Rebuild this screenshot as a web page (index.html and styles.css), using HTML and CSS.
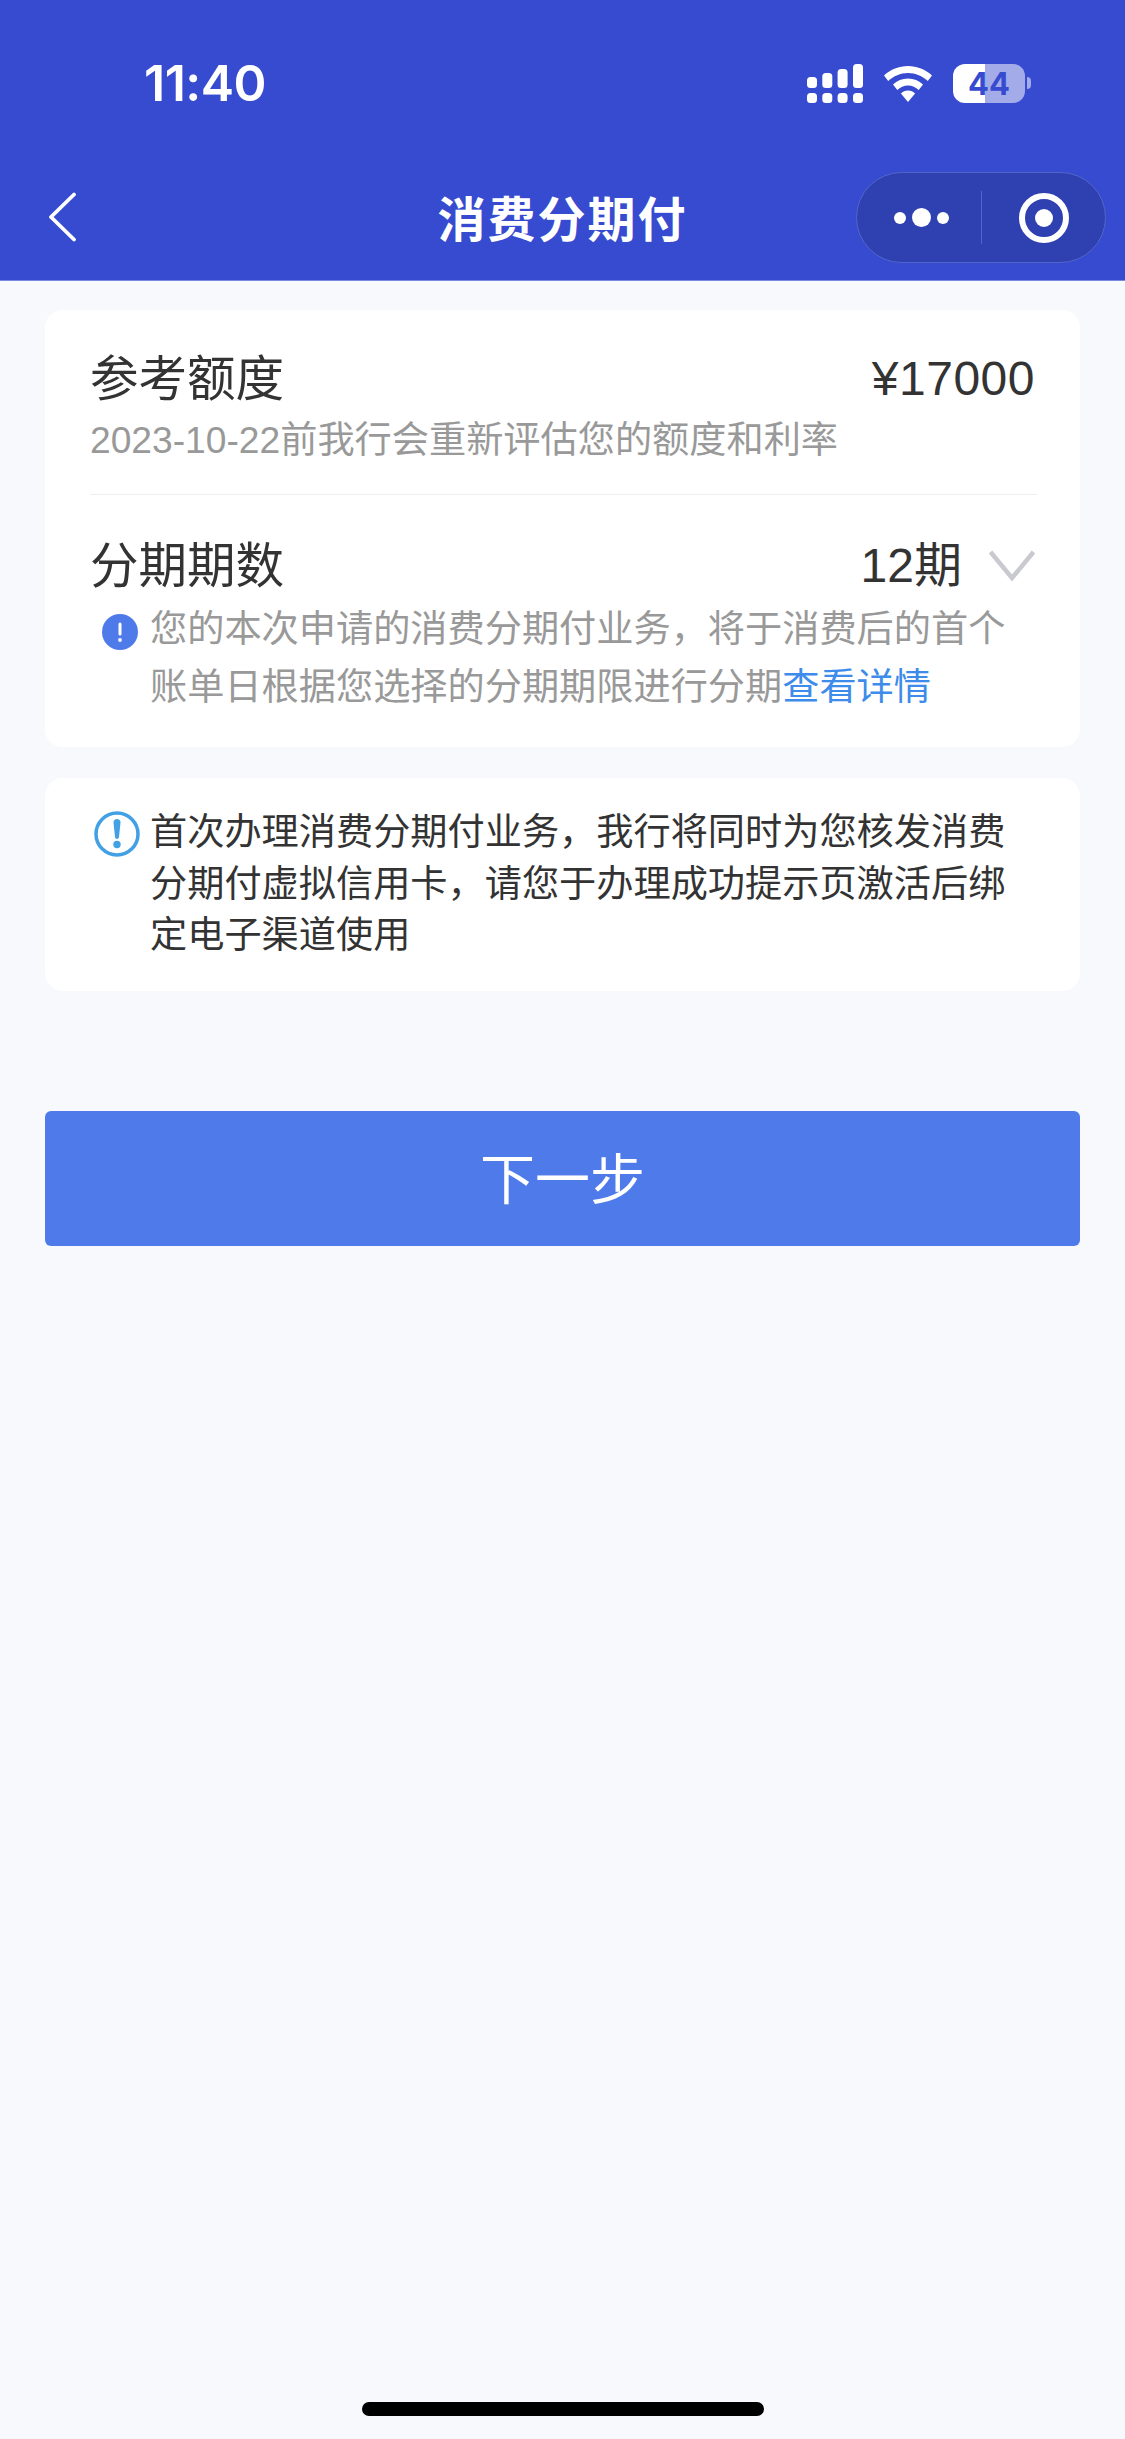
FILE: index.html
```html
<!DOCTYPE html>
<html lang="zh-CN">
<head>
<meta charset="utf-8">
<title>消费分期付</title>
<link rel="stylesheet" href="styles.css">
</head>
<body>
<div class="page">
  <header class="header">
    <div class="status">
      <span class="time">11:40</span>
      <div class="status-icons">
        <svg class="signal" width="56" height="39" viewBox="0 0 56 39" fill="#fff">
          <rect x="0" y="13" width="10" height="11" rx="3.5"/><rect x="15.3" y="9" width="10" height="15" rx="3.5"/><rect x="30.6" y="5" width="10" height="19" rx="3.5"/><rect x="46" y="0" width="10" height="24" rx="3.5"/>
          <rect x="0" y="29" width="10" height="10" rx="3.5"/><rect x="15.3" y="29" width="10" height="10" rx="3.5"/><rect x="30.6" y="29" width="10" height="10" rx="3.5"/><rect x="46" y="29" width="10" height="10" rx="3.5"/>
        </svg>
        <svg class="wifi" width="48" height="36" viewBox="0 0 48 36" fill="#fff">
          <path d="M24 0C33 0 41.500 3.500 48 9.500L43.800 15C38.500 10 31.500 7 24 7S9.500 10 4.200 15L0 9.500C6.500 3.500 15 0 24 0Z"/>
          <path d="M24 12.500C29.800 12.500 35 14.700 39 18.500L34.700 24C31.900 21.300 28.100 19.500 24 19.500S16.100 21.300 13.300 24L9 18.500C13 14.700 18.200 12.500 24 12.500Z"/>
          <path d="M24 24.500C26.800 24.500 29.300 25.600 31.100 27.400L24 36L16.900 27.400C18.700 25.600 21.200 24.500 24 24.500Z"/>
        </svg>
        <div class="battery"><span class="battery-level">44</span></div>
        <span class="battery-nub"></span>
      </div>
    </div>
    <nav class="nav">
      <svg class="back" width="30" height="50" viewBox="0 0 30 50" fill="none" stroke="#fff" stroke-width="3.800" stroke-linecap="round" stroke-linejoin="round">
        <path d="M26 2.500L3 25L26 47.500"/>
      </svg>
      <h1 class="title">消费分期付</h1>
      <div class="capsule">
        <div class="capsule-part dots">
          <span class="dot"></span><span class="dot dot-big"></span><span class="dot"></span>
        </div>
        <span class="capsule-line"></span>
        <div class="capsule-part target"><span class="target-dot"></span></div>
      </div>
    </nav>
  </header>

  <main class="main">
    <section class="card card-info">
      <div class="limit">
        <div class="row">
          <span class="label">参考额度</span>
          <span class="amount amount-money">¥17000</span>
        </div>
        <p class="sub">2023-10-22前我行会重新评估您的额度和利率</p>
      </div>
      <div class="term">
        <div class="row">
          <span class="label">分期期数</span>
          <div class="term-value">
            <span class="amount">12期</span>
            <svg class="chevron" width="46" height="32" viewBox="0 0 46 32" fill="none" stroke="#c9cad0" stroke-width="4.500">
              <path d="M1.500 2L23 28L44.500 2"/>
            </svg>
          </div>
        </div>
        <div class="term-note">
          <svg class="note-icon" width="36" height="36" viewBox="0 0 36 36">
            <circle cx="18" cy="18" r="18" fill="#4f7ae9"/>
            <rect x="16.500" y="8.500" width="3" height="13" rx="1.500" fill="#fff"/>
            <circle cx="18" cy="26" r="1.900" fill="#fff"/>
          </svg>
          <p class="note-text">您的本次申请的消费分期付业务，将于消费后的首个账单日根据您选择的分期期限进行分期<a class="link">查看详情</a></p>
        </div>
      </div>
    </section>

    <section class="card card-tip">
      <svg class="tip-icon" width="46" height="46" viewBox="0 0 46 46">
        <circle cx="23" cy="23" r="21" fill="none" stroke="#41a1e4" stroke-width="3.500"/>
        <path d="M19.500 11.500C19.500 9.500 21 8 23 8S26.500 9.500 26.500 11.500L25 26C24.800 27.200 24 28 23 28S21.200 27.200 21 26Z" fill="#41a1e4"/>
        <circle cx="23" cy="33.500" r="3.700" fill="#41a1e4"/>
      </svg>
      <p class="tip-text">首次办理消费分期付业务，我行将同时为您核发消费分期付虚拟信用卡，请您于办理成功提示页激活后绑定电子渠道使用</p>
    </section>

    <button class="next" type="button">下一步</button>
  </main>

  <div class="home-bar"><span class="home-indicator"></span></div>
</div>
</body>
</html>
```

FILE: styles.css
```css
* { box-sizing: border-box; }

html, body {
  margin: 0;
  padding: 0;
  height: 100%;
}

body {
  background: #f8f9fd;
  font-family: "Liberation Sans", "Noto Sans CJK SC", sans-serif;
  color: #333;
}

.page {
  display: flex;
  flex-direction: column;
  height: 2439px;
}

.header {
  height: 281px;
  flex: none;
  background: #364bd0;
  border-bottom: 1px solid #7a89e2;
  color: #fff;
}

.status {
  height: 166px;
  display: flex;
  justify-content: space-between;
  padding: 58px 94px 0 144px;
}

.time {
  font-family: Inter, "Liberation Sans", sans-serif;
  font-size: 50px;
  font-weight: 600;
  line-height: 50px;
  height: 50px;
  letter-spacing: -0.5px;
}

.status-icons {
  display: flex;
  align-items: flex-start;
  padding-top: 6px;
}

.signal { display: block; }

.wifi {
  display: block;
  margin: 2px 0 0 21px;
}

.battery {
  margin-left: 21px;
  width: 72px;
  height: 39px;
  border-radius: 12px;
  background: linear-gradient(90deg, #fff 0, #fff 32px, #a3ace9 32px, #a3ace9 100%);
  display: flex;
  align-items: center;
  justify-content: center;
}

.battery-level {
  font-family: Inter, "Liberation Sans", sans-serif;
  font-size: 31px;
  font-weight: 700;
  line-height: 39px;
  color: #364bd0;
}

.battery-nub {
  width: 4px;
  height: 12px;
  margin: 13px 0 0 2px;
  border-radius: 0 4px 4px 0;
  background: #a3ace9;
}

.nav {
  height: 114px;
  display: grid;
  grid-template-columns: 1fr auto 1fr;
  align-items: start;
  padding: 6px 19px 0;
}

.back {
  display: block;
  margin: 20px 0 0 29px;
}

.title {
  margin: 0;
  font-size: 48px;
  font-weight: 700;
  line-height: 88px;
  letter-spacing: 2px;
  font-family: "Noto Sans CJK SC", sans-serif;
}

.capsule {
  justify-self: end;
  width: 250px;
  height: 91px;
  display: flex;
  align-items: center;
  border-radius: 46px;
  background: #2f40b1;
  border: 1.500px solid #5465ca;
}

.capsule-part {
  display: flex;
  align-items: center;
  justify-content: center;
}

.dots {
  width: 124px;
  gap: 6px;
  padding-left: 4px;
}

.dot {
  width: 12px;
  height: 12px;
  border-radius: 50%;
  background: #fff;
}

.dot-big {
  width: 19px;
  height: 19px;
}

.capsule-line {
  width: 1px;
  height: 53px;
  background: #5465ca;
}

.target {
  width: 50px;
  height: 50px;
  margin-left: 37px;
  border: 6px solid #fff;
  border-radius: 50%;
}

.target-dot {
  width: 18px;
  height: 18px;
  border-radius: 50%;
  background: #fff;
}

.main {
  flex: 1;
  padding: 29px 45px 0;
}

.card {
  background: #fff;
  border-radius: 18px;
}

.card-info {
  height: 437px;
  padding: 0 45px;
}

.limit {
  height: 185px;
  padding-top: 42px;
  margin-right: -2px;
  border-bottom: 1px solid #eeeff2;
}

.limit .row { margin-right: 2px; }

.row {
  display: flex;
  justify-content: space-between;
  align-items: center;
  height: 54px;
}

.label {
  font-size: 48.500px;
  line-height: 54px;
  color: #333;
}

.amount {
  font-size: 48px;
  line-height: 54px;
  color: #333;
}

.amount-money { letter-spacing: 0.5px; }

.sub {
  margin: 9px 0 0;
  font-size: 37.200px;
  line-height: 50px;
  color: #999;
}

.term { padding-top: 44px; }

.term-value {
  display: flex;
  align-items: center;
  gap: 27px;
}

.chevron { display: block; }

.term-note {
  display: flex;
  align-items: flex-start;
  gap: 12px;
  margin-top: 8px;
  padding-left: 12px;
}

.note-icon {
  flex: none;
  display: block;
  margin-top: 13px;
}

.note-text {
  margin: 0;
  flex: 1;
  font-size: 37.200px;
  line-height: 57.500px;
  color: #999;
}

.link { color: #3d8bea; }

.card-tip {
  height: 213px;
  margin-top: 31px;
  padding: 29px 45px 0 49px;
  display: flex;
  align-items: flex-start;
  gap: 10px;
}

.tip-icon {
  flex: none;
  display: block;
  margin-top: 4px;
}

.tip-text {
  margin: 0;
  flex: 1;
  font-size: 37.200px;
  line-height: 51.500px;
  color: #333;
}

.next {
  display: block;
  width: 100%;
  height: 135px;
  margin-top: 120px;
  padding: 0 0 8px;
  border: 0;
  border-radius: 6px;
  background: #4f7ae9;
  color: #fff;
  font-family: "Noto Sans CJK SC", sans-serif;
  font-size: 55px;
}

.home-bar {
  flex: none;
  height: 37px;
  display: flex;
  justify-content: center;
}

.home-indicator {
  width: 402px;
  height: 14px;
  border-radius: 7px;
  background: #000;
}
```
